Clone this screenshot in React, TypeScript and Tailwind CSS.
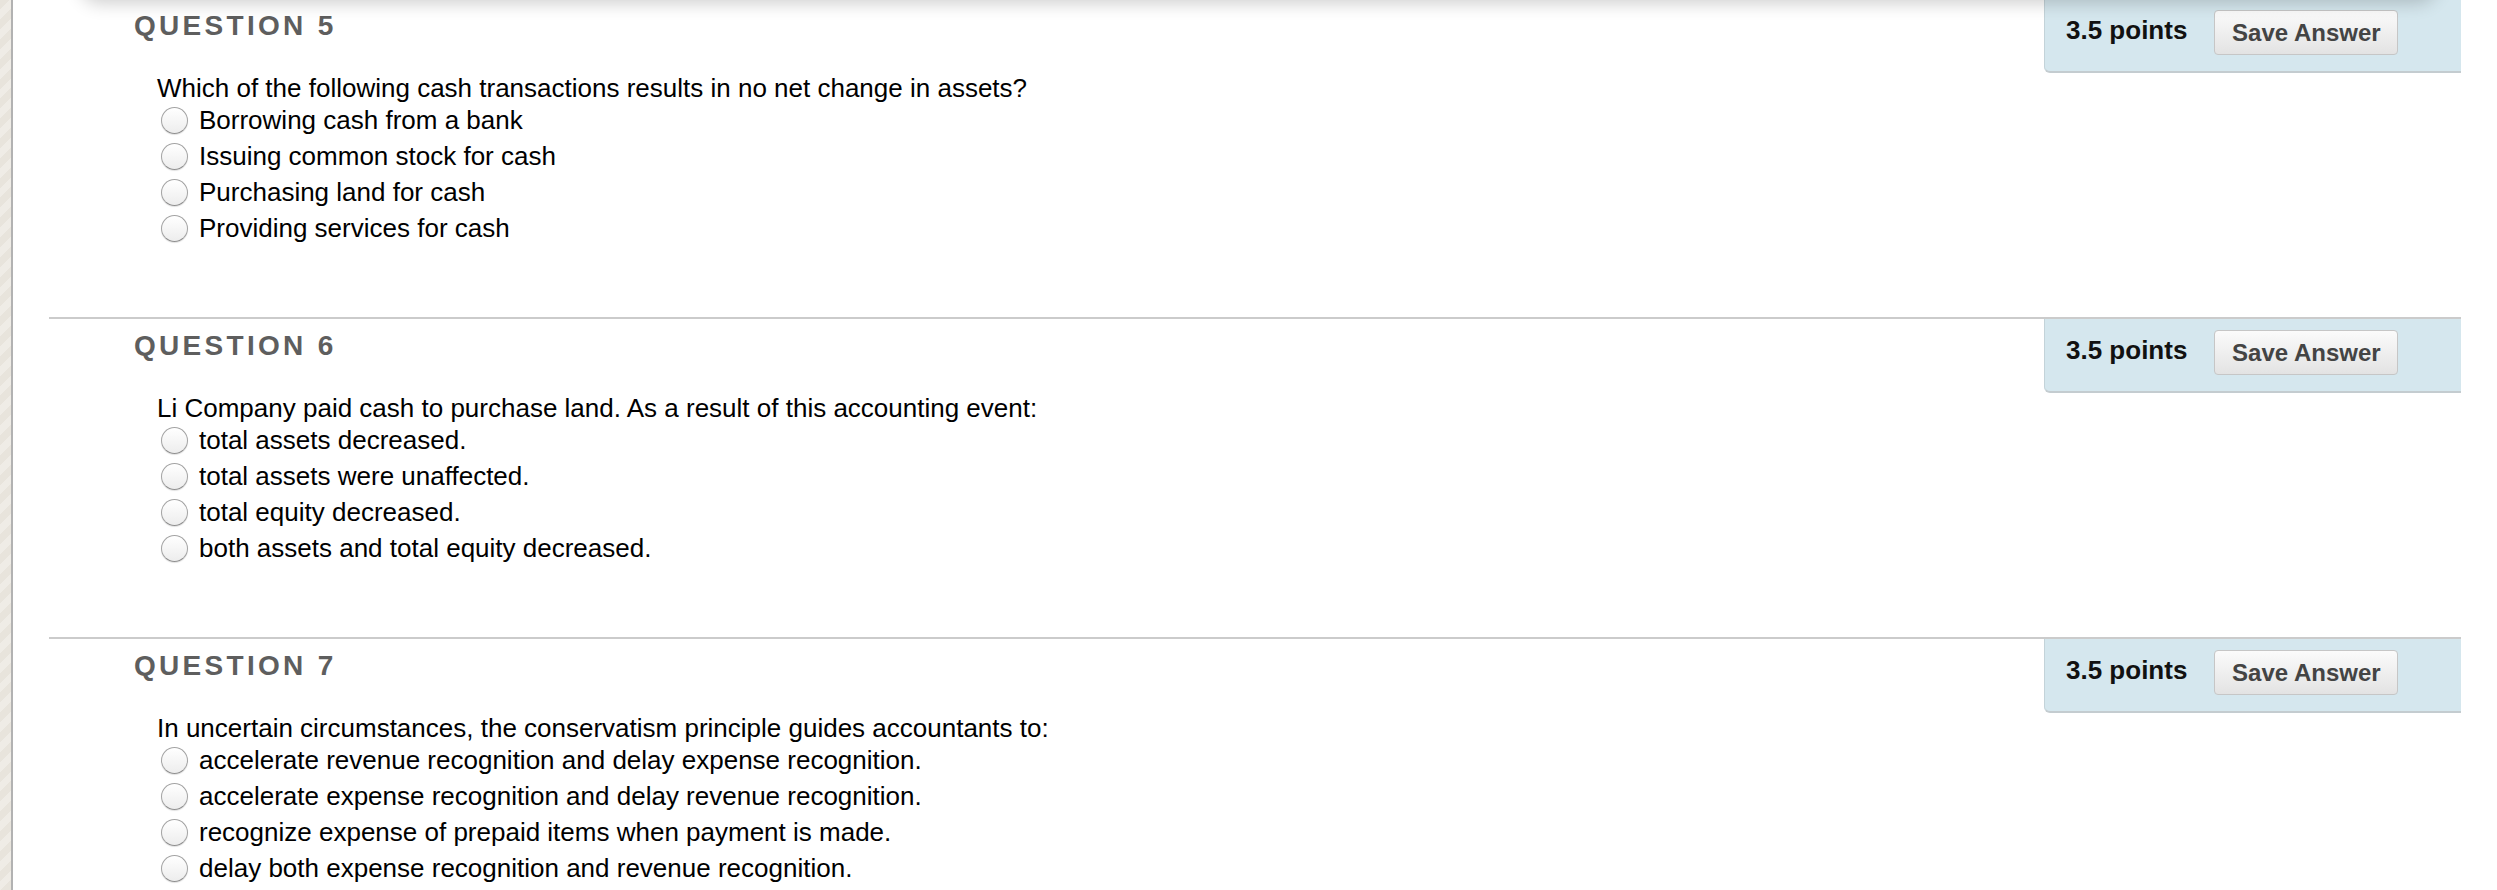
import React from 'react';

interface Question {
  number: number;
  text: string;
  options: string[];
  points: string;
}

const questions: Question[] = [
  {
    number: 5,
    text: 'Which of the following cash transactions results in no net change in assets?',
    options: [
      'Borrowing cash from a bank',
      'Issuing common stock for cash',
      'Purchasing land for cash',
      'Providing services for cash',
    ],
    points: '3.5 points',
  },
  {
    number: 6,
    text: 'Li Company paid cash to purchase land. As a result of this accounting event:',
    options: [
      'total assets decreased.',
      'total assets were unaffected.',
      'total equity decreased.',
      'both assets and total equity decreased.',
    ],
    points: '3.5 points',
  },
  {
    number: 7,
    text: 'In uncertain circumstances, the conservatism principle guides accountants to:',
    options: [
      'accelerate revenue recognition and delay expense recognition.',
      'accelerate expense recognition and delay revenue recognition.',
      'recognize expense of prepaid items when payment is made.',
      'delay both expense recognition and revenue recognition.',
    ],
    points: '3.5 points',
  },
];

const Radio: React.FC = () => (
  <span className="flex-shrink-0 w-[27px] h-[27px] rounded-full border border-[#a3a3a3] border-b-[#8f8f8f] bg-linear-to-b from-white to-[#ededed] shadow-[0_1px_1px_rgba(0,0,0,0.12)]" />
);

const QuestionBlock: React.FC<{ q: Question }> = ({ q }) => (
  <section className="flex h-[320px] border-t-2 border-[#cbcbcb]">
    <div className="flex-1 pt-[12px]">
      <h3 className="pl-[85px] text-[28px] leading-[30px] font-bold tracking-[3.3px] text-[#5e5e5e]">
        QUESTION {q.number}
      </h3>
      <p className="mt-[33px] pl-[108px] text-[26px] leading-[28px] text-black">{q.text}</p>
      <ul className="pl-[112px]">
        {q.options.map((opt, i) => (
          <li key={i} className="flex items-center h-[36px] gap-[11px]">
            <Radio />
            <span className="text-[26px] leading-[36px] text-black">{opt}</span>
          </li>
        ))}
      </ul>
    </div>
    <div className="flex-shrink-0 self-start flex items-start w-[417px] h-[74px] pt-[11px] pl-[21px] bg-[#d5e7ee] border-l border-b-2 border-l-[#c3d3d9] border-b-[#c4ccd0] rounded-bl-[6px]">
      <span className="mt-[5px] text-[26px] leading-[30px] font-bold text-[#111]">{q.points}</span>
      <button className="ml-[27px] w-[184px] h-[45px] rounded-[4px] border border-[#c6c6c6] bg-linear-to-b from-[#fbfbfb] to-[#e3e3e3] text-[24px] font-bold text-[#444]">
        Save Answer
      </button>
    </div>
  </section>
);

export default function App() {
  return (
    <div className="relative flex h-[890px] w-full overflow-hidden bg-white font-['Liberation_Sans',Arial,sans-serif]">
      <div className="w-[11px] flex-shrink-0 bg-[repeating-linear-gradient(135deg,#e8e4dc_0px,#e8e4dc_7px,#efece6_7px,#efece6_14px)]" />
      <div className="w-[2px] flex-shrink-0 bg-[#b2b2b2]" />
      <main className="flex-1 ml-[36px] mr-[36px] -mt-[3px]">
        {questions.map((q) => (
          <QuestionBlock key={q.number} q={q} />
        ))}
      </main>
      {/* shadow cast by the panel above the visible area */}
      <div className="absolute -top-[40px] left-[80px] right-[60px] h-[40px] rounded-[40px] bg-white shadow-[0_3px_18px_rgba(0,0,0,0.2)]" />
    </div>
  );
}
